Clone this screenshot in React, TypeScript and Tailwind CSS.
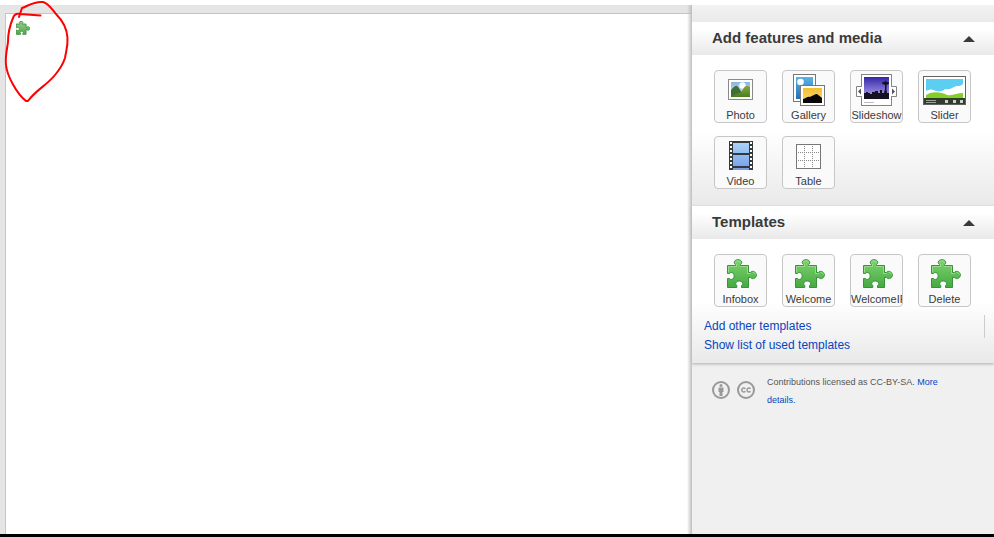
import type { ReactNode } from 'react'

interface Item { label: string, icon: ReactNode }

function PuzzleIcon({ small = false }: { small?: boolean }) {
  return (
    <svg viewBox={small ? '0 0 30 30' : '-2 0 32 30'} className={small ? 'w-[14px] h-[14px]' : 'w-8 h-[30px]'} aria-hidden="true">
      <defs>
        <linearGradient id={small ? 'puzzle-small' : 'puzzle'} x1="0" y1="0" x2="0" y2="1">
          <stop offset="0" stopColor={small ? '#9ccf94' : '#7fd36f'} />
          <stop offset="1" stopColor={small ? '#4fa84b' : '#45a941'} />
        </linearGradient>
      </defs>
      <path
        d="M.5 6.5H8.500V5.500C7.500 4.800 7 4 7.300 2.900C8 -.1 14 -.1 14.700 2.900C15 4 14.500 4.800 13.500 5.500V6.500H21.500V13.500H23.500C24 12.300 25.500 12.200 26.500 12.400C30.300 13.300 30.300 18.700 26.500 19.600C25.500 19.800 24 19.500 23.500 18.500H21.500V28.500H14.500V26.500C16 25.700 16 24.300 15.300 23.200C14 21.600 10.500 21.600 9.200 23.200C8.300 24.300 8.500 25.700 9.800 26.500V28.500H.5V19.500H2.500C3.300 20.800 4.900 20.700 6 19.800C7.600 18.300 7.500 15.200 6 14C4.900 13.100 3.300 13.100 2.500 14.500H.5Z"
        fill={small ? 'url(#puzzle-small)' : 'url(#puzzle)'}
        stroke={small ? '#3f9440' : '#37933a'}
        strokeWidth={small ? 2 : 1}
      />
      {!small && <path d="M1.500 13.500V7.500H9.500V5M8.500 3.500C9 1.200 13 1.200 13.500 3.500M13 7.500H20.500V14.500H24M25.500 13.500C28 13.600 28.500 15 28.500 16" fill="none" stroke="#a5e598" strokeOpacity=".7" />}
    </svg>
  )
}

function PhotoIcon() {
  return (
    <svg viewBox="0 0 26 22" className="w-[26px] h-[22px]" aria-hidden="true">
      <defs>
        <linearGradient id="photo-sky" x1="0" y1="0" x2="0" y2="1">
          <stop offset="0" stopColor="#8bb6dc" /><stop offset="1" stopColor="#d5e8f4" />
        </linearGradient>
        <linearGradient id="photo-hill" x1="0" y1="0" x2="0" y2="1">
          <stop offset="0" stopColor="#86a940" /><stop offset="1" stopColor="#48801c" />
        </linearGradient>
      </defs>
      <rect x=".5" y=".5" width="24" height="20" fill="#fff" stroke="#8a8a8a" />
      <path d="M3 3H22V18H3Z" fill="url(#photo-sky)" />
      <circle cx="14.500" cy="6.500" r="3.200" fill="#fff" />
      <path d="M3 11C5 9 7 6 9 7C11 8 12 12 14 13V18H3Z" fill="#426f35" />
      <path d="M4 18C7 14 12 15 14 12C16 8 18 5 22 8V18Z" fill="url(#photo-hill)" />
    </svg>
  )
}

function GalleryIcon() {
  return (
    <svg viewBox="0 0 32 32" className="w-8 h-8" aria-hidden="true">
      <defs>
        <linearGradient id="gallery-sky" x1="0" y1="0" x2="0" y2="1">
          <stop offset="0" stopColor="#5bb4e5" /><stop offset="1" stopColor="#2470af" />
        </linearGradient>
        <linearGradient id="gallery-dusk" x1="0" y1="0" x2="0" y2="1">
          <stop offset="0" stopColor="#f5bd31" /><stop offset="1" stopColor="#fbdf75" />
        </linearGradient>
      </defs>
      <rect x=".5" y=".5" width="22" height="27" fill="#fff" stroke="#777" />
      <path d="M3 3H20V25H3Z" fill="url(#gallery-sky)" />
      <circle cx="7.500" cy="8" r="3.300" fill="#fff" />
      <rect x="7.500" y="11.500" width="24" height="20" fill="#fff" stroke="#777" />
      <path d="M10 14H29V29H10Z" fill="url(#gallery-dusk)" />
      <path d="M10 25C13 25 14 22 17 23C19 22 22 20 24 20L29 24V29H10Z" fill="#080706" />
    </svg>
  )
}

function SlideshowIcon() {
  return (
    <svg viewBox="0 0 41 32" className="w-[41px] h-8" aria-hidden="true">
      <defs>
        <linearGradient id="slideshow-sky" x1="0" y1="0" x2="0" y2="1">
          <stop offset="0" stopColor="#3426a8" /><stop offset="1" stopColor="#b9aaf0" />
        </linearGradient>
      </defs>
      <rect x="5.500" y=".5" width="30" height="31" fill="#fff" stroke="#858585" />
      <path d="M5.500 12.500H.5V22.500H5.500M35.500 12.500H40.500V22.500H35.500" fill="#fff" stroke="#858585" />
      <path d="M5 13H6.500V22H5ZM34.500 13H36V22H34.500Z" fill="#fff" />
      <path d="M5 14.500V20.500L2 17.500ZM36 14.500V20.500L39 17.500Z" fill="#555" />
      <path d="M8 3H33V25H8Z" fill="url(#slideshow-sky)" />
      <path d="M8 19H10V18H12V19H14V20H16V18H19V17H22V19H24V16H26V19H28L29 15V11L26 9.500V8.500L29 7.500L29.500 6L30 7.500L33 8.500V9.500L30.500 11V15L31 19H33V25H8Z" fill="#151322" />
      <path d="M8 28.500H18" stroke="#bbb" />
    </svg>
  )
}

function SliderIcon() {
  return (
    <svg viewBox="0 0 43 29" className="w-[43px] h-[29px]" aria-hidden="true">
      <rect x=".5" y=".5" width="42" height="28" fill="#fff" stroke="#626262" />
      <path d="M3 3H40V23H3Z" fill="#5bcef1" />
      <path d="M3 15C7 13 10 13 13 15C17 16 20 15 22 13C26 14 29 12 31 11C34 9 37 11 40 8V23H3Z" fill="#fff" />
      <path d="M3 19C10 15 18 16 24 19C30 20 34 17 40 17V23H3Z" fill="#83cf28" />
      <path d="M1 22H42V28H1Z" fill="#303d2d" />
      <path d="M3 24.500H13M3 26.500H13" stroke="#9ca199" />
      <path d="M22 24H25V27H22ZM30 24H33V27H30ZM37 24H40V27H37Z" fill="#cbd0ca" />
    </svg>
  )
}

function VideoIcon() {
  return (
    <svg viewBox="0 0 26 30" className="w-[26px] h-[30px]" aria-hidden="true">
      <defs>
        <linearGradient id="film" x1="0" y1="0" x2="0" y2="1">
          <stop offset="0" stopColor="#a7d4f6" /><stop offset="1" stopColor="#779bea" />
        </linearGradient>
      </defs>
      <path d="M1 0H25V29H1Z" fill="#343a3c" />
      <path d="M5 2H21V12H5ZM5 14H21V25H5ZM5 27H21V29H5Z" fill="url(#film)" />
      <path d="M3 1V29M23 1V29" stroke="#fff" strokeWidth="2" strokeDasharray="2 2" />
    </svg>
  )
}

function TableIcon() {
  return (
    <svg viewBox="0 0 25 25" className="w-[25px] h-[25px]" aria-hidden="true">
      <rect x=".5" y=".5" width="24" height="24" fill="#fff" stroke="#747974" />
      <path d="M8.500 2V24M16.500 2V24M2 8.500H24M2 16.500H24" stroke="#888" strokeDasharray="1 1" />
    </svg>
  )
}

const FEATURES: Item[] = [
  { label: 'Photo', icon: <PhotoIcon /> },
  { label: 'Gallery', icon: <GalleryIcon /> },
  { label: 'Slideshow', icon: <SlideshowIcon /> },
  { label: 'Slider', icon: <SliderIcon /> },
  { label: 'Video', icon: <VideoIcon /> },
  { label: 'Table', icon: <TableIcon /> },
]

const TEMPLATES: Item[] = ['Infobox', 'Welcome', 'WelcomeIP', 'Delete'].map(label => ({ label, icon: <PuzzleIcon /> }))

function PanelHeader({ title }: { title: string }) {
  return (
    <h2 className="bg-linear-to-b from-white from-20% to-[#e9e9e9]">
      <button className="flex h-[33px] w-full items-center justify-between pl-5 pr-[19px] text-left text-[15px] font-bold text-[#3a3a3a]">
        {title}
        <svg viewBox="0 0 12 6" className="w-3 h-[6px]" aria-hidden="true"><path d="M0 6L6 0L12 6Z" fill="#3a3a3a" /></svg>
      </button>
    </h2>
  )
}

function ItemGrid({ items }: { items: Item[] }) {
  return (
    <div className="flex flex-wrap gap-x-[15px] gap-y-[13px] pl-[22px] pr-5">
      {items.map(item => (
        <button key={item.label} className="flex h-[53px] w-[53px] flex-col items-center overflow-hidden rounded border border-[#c6c6c6] bg-[#fafafa]">
          <span className="flex h-[38px] shrink-0 items-center justify-center">{item.icon}</span>
          <span className="max-w-full whitespace-nowrap text-[11px] leading-[13px] text-[#3a3a3a]">{item.label}</span>
        </button>
      ))}
    </div>
  )
}

export default function App() {
  return (
    <div className="flex min-h-screen flex-col border-b-[3px] border-black bg-white pt-[5px] font-['Liberation_Sans',Arial,sans-serif]">
      <div className="flex flex-1">
        {/* Editing area */}
        <main className="relative flex min-w-0 flex-1 bg-[#e5e5e5] pl-[5px] pt-2">
          <div className="flex-1 border-l border-t border-[#c5c5c5] bg-white pl-[10px] pt-[7px]">
            <PuzzleIcon small />
          </div>
          <svg viewBox="0 0 72 104" className="absolute -top-[5px] left-0 h-[104px] w-[72px]" aria-hidden="true">
            <path d="M40.500 15.500L20 14C16 13 14 15 13 18C10 25 8 33 8 42C7 50 5 56 6 65C7 76 17 94 26 101L28 101C36 90 47 85 55 75C60 69 63 64 65 58C66 51 68 47 67.500 38C67 27 62 20 56 14C52 9 48 3 43 2C34 1 28 6 22 8L19 17" fill="none" stroke="#f00" strokeWidth="2" strokeLinecap="round" strokeLinejoin="round" />
          </svg>
        </main>

        {/* Tool rail */}
        <aside className="relative w-[302px] shrink-0 bg-[#f0f0f0]">
          <div className="absolute inset-y-0 -left-[5px] w-[5px] bg-linear-to-r from-transparent to-[#bebebe]" />
          <div className="h-[17px] bg-linear-to-b from-[#f2f2f2] to-[#eaeaea]" />
          <section>
            <PanelHeader title="Add features and media" />
            <div className="bg-linear-to-b from-white from-50% to-[#e9e9e9] pb-[17px] pt-[15px]">
              <ItemGrid items={FEATURES} />
            </div>
          </section>
          <section className="shadow-[0_1px_3px_#aaa]">
            <PanelHeader title="Templates" />
            <div className="bg-linear-to-b from-white from-50% to-[#e9e9e9] pb-2 pt-[15px]">
              <ItemGrid items={TEMPLATES} />
              <div className="mt-2 flex items-start justify-between pl-3 pr-[9px] text-[12px] text-[#0645c0]">
                <div className="flex flex-col pt-[2px] leading-[19px]">
                  <a href="#add">Add other templates</a>
                  <a href="#used">Show list of used templates</a>
                </div>
                <div className="h-[23px] w-px bg-[#ccc]" />
              </div>
            </div>
          </section>
          <footer className="flex gap-3 pl-5 pt-[10px]">
            <div className="flex gap-[7px] pt-2">
              <svg viewBox="0 0 18 18" className="h-[18px] w-[18px]" aria-hidden="true">
                <circle cx="9" cy="9" r="8" fill="none" stroke="#999" strokeWidth="2" />
                <circle cx="9" cy="4.500" r="1.500" fill="#999" />
                <path d="M6.500 6.500H11.500V11H10.500V15H7.500V11H6.500Z" fill="#999" />
              </svg>
              <svg viewBox="0 0 18 18" className="h-[18px] w-[18px]" aria-hidden="true">
                <circle cx="9" cy="9" r="8" fill="none" stroke="#999" strokeWidth="2" />
                <path d="M8.300 7.700A2 2 0 1 0 8.300 10.300M13.500 7.700A2 2 0 1 0 13.500 10.300" fill="none" stroke="#999" strokeWidth="1.500" />
              </svg>
            </div>
            <p className="w-[190px] text-[9px] leading-[18px] text-[#555]">
              Contributions licensed as CC-BY-SA. <a href="#license" className="text-[#0645c0]">More details.</a>
            </p>
          </footer>
        </aside>
      </div>
    </div>
  )
}
